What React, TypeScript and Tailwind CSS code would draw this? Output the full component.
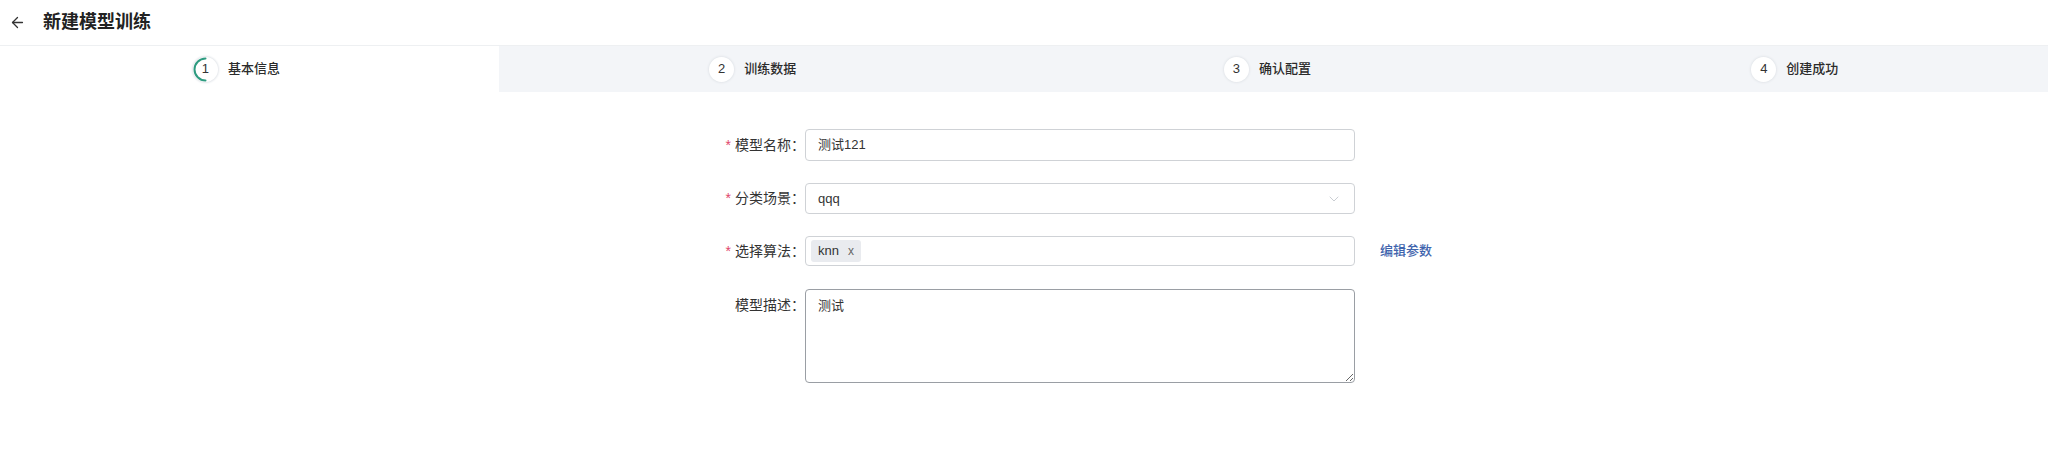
import { ArrowLeft, ChevronDown } from "lucide-react";

const FONT = '"Liberation Sans", "Noto Sans CJK SC", sans-serif';

const steps = [
  { n: 1, title: "基本信息", shift: "bg-white pr-[26px]" },
  { n: 2, title: "训练数据", shift: "bg-[#f3f5f8] pr-[9px]" },
  { n: 3, title: "确认配置", shift: "bg-[#f3f5f8] pr-[12px]" },
  { n: 4, title: "创建成功", shift: "bg-[#f3f5f8] pl-[10px]" },
];

function StepItem({ n, title, active, shift }: { n: number; title: string; active: boolean; shift: string }) {
  return (
    <div className={"flex items-center justify-center gap-[10px] " + shift}>
      <div className="relative flex h-[25px] w-[25px] items-center justify-center rounded-full bg-white text-[13px] text-[#333] shadow-[0_0_2px_1px_#e4e7eb]">
        {active && (
          <svg className="absolute inset-0" width="25" height="25" viewBox="0 0 25 25">
            <path
              d="M12.5 1.5 A11 11 0 0 0 12.5 23.5"
              fill="none"
              stroke="#2e9b80"
              strokeWidth="2"
              strokeLinecap="round"
            />
          </svg>
        )}
        <span className="relative">{n}</span>
      </div>
      <span className="text-[13px] font-medium text-[#2b2b2b]">{title}</span>
    </div>
  );
}

function Label({ text, required }: { text: string; required?: boolean }) {
  return (
    <div className="flex w-[123px] shrink-0 items-center justify-end text-[14px] text-[#333]">
      {required && <span className="mr-[4px] text-[#e0456b]">*</span>}
      <span>{text}：</span>
    </div>
  );
}

export default function App() {
  return (
    <div className="h-[474px] w-full bg-white" style={{ fontFamily: FONT }}>
      <div className="flex h-[46px] items-center gap-[17px] border-b border-[#eef0f2] pl-[9px]">
        <ArrowLeft className="h-[17px] w-[17px] text-[#333]" strokeWidth={1.8} />
        <h1 className="text-[18px] font-bold text-[#222]">新建模型训练</h1>
      </div>

      <div className="grid h-[46px] grid-cols-[499px_1fr_1fr_1fr]">
        {steps.map((s) => (
          <StepItem key={s.n} n={s.n} title={s.title} active={s.n === 1} shift={s.shift} />
        ))}
      </div>

      <div className="flex flex-col gap-[22px] pl-[682px] pt-[37px]">
        <div className="flex items-center">
          <Label text="模型名称" required />
          <div className="flex h-[32px] w-[550px] items-center rounded-[4px] border border-[#cfd2d6] px-[12px] text-[13px] text-[#333]">
            测试121
          </div>
        </div>

        <div className="flex items-center">
          <Label text="分类场景" required />
          <div className="flex h-[31px] w-[550px] items-center justify-between rounded-[4px] border border-[#cfd2d6] px-[12px] text-[13px] text-[#333]">
            <span>qqq</span>
            <ChevronDown className="h-[16px] w-[16px] text-[#c2c6cc]" strokeWidth={1.3} />
          </div>
        </div>

        <div className="flex items-center">
          <Label text="选择算法" required />
          <div className="flex h-[30px] w-[550px] items-center rounded-[4px] border border-[#cfd2d6] px-[5px] text-[13px] text-[#333]">
            <span className="flex h-[22px] items-center gap-[9px] rounded-[3px] bg-[#e9ebef] px-[7px]">
              <span>knn</span>
              <span className="text-[12px] text-[#666]">x</span>
            </span>
          </div>
          <a className="ml-[25px] text-[13px] font-medium text-[#3f64ad]">编辑参数</a>
        </div>

        <div className="flex items-start">
          <div className="pt-[7px]">
            <Label text="模型描述" />
          </div>
          <textarea
            readOnly
            defaultValue="测试"
            className="mt-[1px] h-[94px] w-[550px] resize-y rounded-[4px] border border-[#9a9ea4] px-[12px] py-[6px] text-[13px] text-[#333] outline-none"
            style={{ fontFamily: FONT }}
          />
        </div>
      </div>
    </div>
  );
}
